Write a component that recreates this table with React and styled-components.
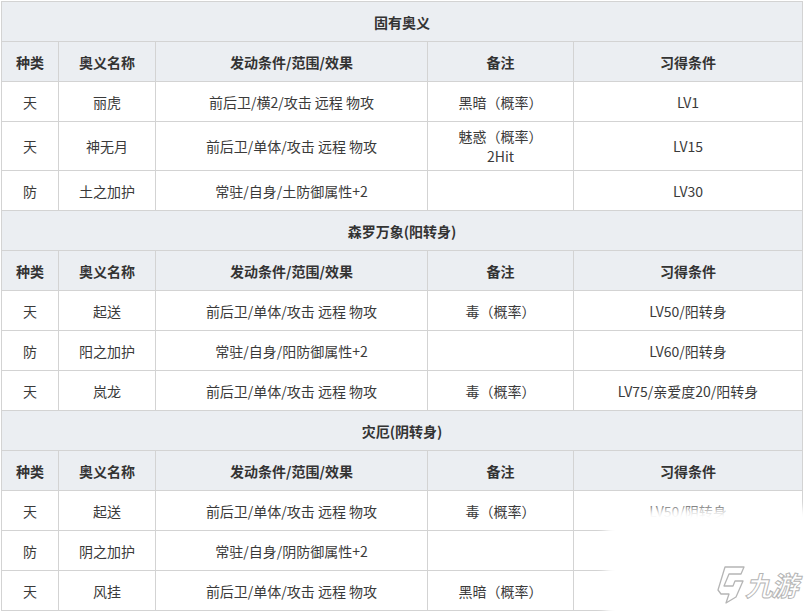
import React from "react";
import styled, { createGlobalStyle } from "styled-components";

const sections = [
  {
    title: "固有奥义",
    rows: [
      ["天", "丽虎", "前后卫/横2/攻击 远程 物攻", "黑暗（概率）", "LV1"],
      ["天", "神无月", "前后卫/单体/攻击 远程 物攻", "魅惑（概率）\n2Hit", "LV15"],
      ["防", "土之加护", "常驻/自身/土防御属性+2", "", "LV30"],
    ],
  },
  {
    title: "森罗万象(阳转身)",
    rows: [
      ["天", "起送", "前后卫/单体/攻击 远程 物攻", "毒（概率）", "LV50/阳转身"],
      ["防", "阳之加护", "常驻/自身/阳防御属性+2", "", "LV60/阳转身"],
      ["天", "岚龙", "前后卫/单体/攻击 远程 物攻", "毒（概率）", "LV75/亲爱度20/阳转身"],
    ],
  },
  {
    title: "灾厄(阴转身)",
    rows: [
      ["天", "起送", "前后卫/单体/攻击 远程 物攻", "毒（概率）", "LV50/阴转身"],
      ["防", "阴之加护", "常驻/自身/阴防御属性+2", "", "LV60/阴转身"],
      ["天", "风挂", "前后卫/单体/攻击 远程 物攻", "黑暗（概率）", "LV75/亲爱度20/阴转身"],
    ],
  },
];

const headers = ["种类", "奥义名称", "发动条件/范围/效果", "备注", "习得条件"];
const widths = [57, 97, 272, 146, 229];

const GlobalStyle = createGlobalStyle`
  html, body {
    margin: 0;
    padding: 0;
    background: #fff;
  }
  body {
    font-family: "Noto Sans CJK SC", "Noto Sans", sans-serif;
    color: #333;
  }
`;

const Page = styled.div`
  position: relative;
  width: 807px;
  height: 612px;
  overflow: hidden;
  padding: 1px 0 0 1px;
  box-sizing: border-box;
`;

const Table = styled.table`
  width: 802px;
  border-collapse: collapse;
  table-layout: fixed;
  font-size: 14px;
  line-height: 20px;
`;

const TitleCell = styled.td`
  height: 39px;
  padding: 0;
  background: #ebeef2;
  border: 1px solid #d3d3d3;
  text-align: center;
  font-weight: bold;
  color: #333;
`;

const HeadCell = styled.th`
  height: 39px;
  padding: 0;
  background: #ebeef2;
  border: 1px solid #d3d3d3;
  text-align: center;
  font-weight: bold;
  color: #333;
`;

const Cell = styled.td`
  height: ${(p) => (p.$tall ? 48 : 39)}px;
  padding: 0;
  border: 1px solid #d3d3d3;
  text-align: center;
  vertical-align: middle;
  color: #3a3a3a;
  white-space: pre-line;
`;

const Watermark = styled.div`
  position: absolute;
  left: 606px;
  top: 508px;
  width: 220px;
  height: 120px;
  background: #fff;
  filter: blur(5px);
`;

const Logo = styled.div`
  position: absolute;
  left: 716px;
  top: 564px;
  height: 42px;
  display: flex;
  align-items: center;
  gap: 2px;
`;

const LogoText = styled.span`
  display: inline-block;
  font-family: "Noto Sans CJK SC", sans-serif;
  font-size: 27px;
  line-height: 30px;
  font-weight: bold;
  letter-spacing: -1px;
  color: #fff;
  -webkit-text-stroke: 1px #b5b5b5;
  transform: skewX(-14deg);
`;

export default function App() {
  return (
    <Page>
      <GlobalStyle />
      <Table>
        <colgroup>
          {widths.map((w, i) => (
            <col key={i} style={{ width: w }} />
          ))}
        </colgroup>
        <tbody>
          {sections.map((s) => (
            <React.Fragment key={s.title}>
              <tr>
                <TitleCell colSpan={5}>{s.title}</TitleCell>
              </tr>
              <tr>
                {headers.map((h) => (
                  <HeadCell key={h}>{h}</HeadCell>
                ))}
              </tr>
              {s.rows.map((r, i) => {
                const tall = r.some((c) => c.includes("\n"));
                return (
                  <tr key={i}>
                    {r.map((c, j) => (
                      <Cell key={j} $tall={tall}>
                        {c}
                      </Cell>
                    ))}
                  </tr>
                );
              })}
            </React.Fragment>
          ))}
        </tbody>
      </Table>
      <Watermark />
      <Logo>
        <svg width="30" height="42" viewBox="0 0 30 42">
          <path
            d="M9 3 L28 3 L25 10 L13 10 L8 22 L17 22 L19 17 L27 17 L20 33 L10 39 L13 30 L5 30 L2 26 Z"
            fill="#fff"
            stroke="#b5b5b5"
            strokeWidth="1.3"
            strokeLinejoin="round"
          />
        </svg>
        <LogoText>九游</LogoText>
      </Logo>
    </Page>
  );
}
